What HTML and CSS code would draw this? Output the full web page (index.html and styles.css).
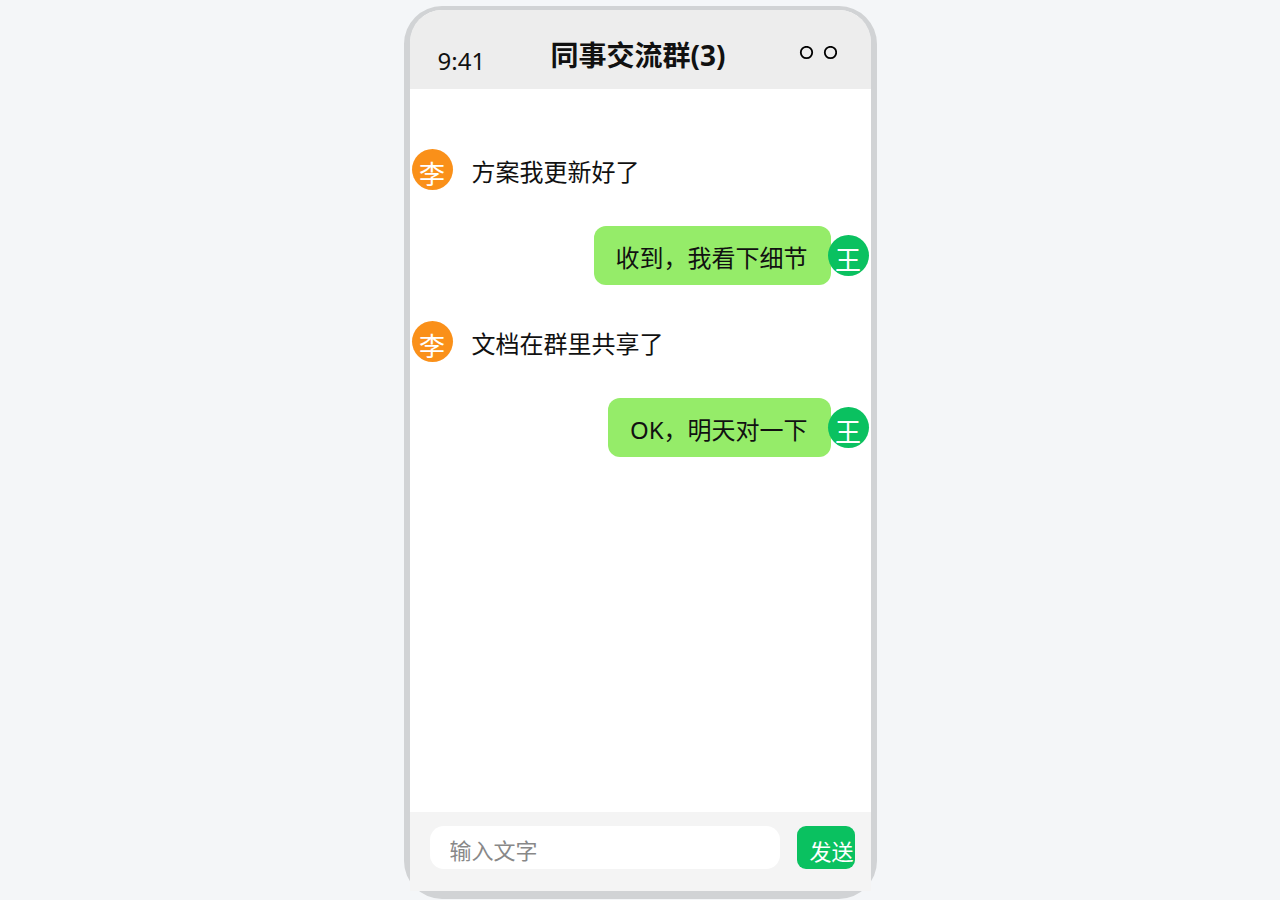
FILE: index.html
```html
<!DOCTYPE html>
<html lang="zh-CN">
<head>
    <meta charset="UTF-8">
    <meta name="viewport" content="width=device-width, initial-scale=1.0">
    <title>同事交流群</title>
    <link rel="stylesheet" href="styles.css">
</head>
<body>
    <div class="phone">
        <header class="chat-header">
            <span class="time">9:41</span>
            <h1 class="title">同事交流群(3)</h1>
            <svg class="dots" width="38" height="14" viewBox="0 0 38 14" fill="none" stroke="#000" stroke-width="1.8" aria-hidden="true">
                <circle cx="7.5" cy="6.5" r="5.7"/>
                <circle cx="31.5" cy="6.5" r="5.7"/>
            </svg>
        </header>

        <main class="messages">
            <div class="message other">
                <span class="avatar">李</span>
                <p class="bubble">方案我更新好了</p>
            </div>
            <div class="message user">
                <span class="avatar">王</span>
                <p class="bubble">收到，我看下细节</p>
            </div>
            <div class="message other">
                <span class="avatar">李</span>
                <p class="bubble">文档在群里共享了</p>
            </div>
            <div class="message user">
                <span class="avatar">王</span>
                <p class="bubble">OK，明天对一下</p>
            </div>
        </main>

        <form class="chat-input">
            <input type="text" class="text-input" placeholder="输入文字" aria-label="输入文字">
            <button type="button" class="send">发送</button>
        </form>
    </div>
</body>
</html>
```
FILE: styles.css
```css
* {
    box-sizing: border-box;
}

body {
    margin: 0;
    padding: 6px 16px 1px;
    min-height: 100vh;
    display: flex;
    justify-content: center;
    background-color: #f4f6f8;
    color: #111;
    font-family: "Noto Sans", "Noto Sans CJK SC", sans-serif;
    font-size: 24px;
}

.phone {
    width: 100%;
    max-width: 473px;
    display: flex;
    flex-direction: column;
    background-color: #fff;
    border: 6px solid #d1d3d5;
    border-top-width: 4px;
    border-bottom-width: 8px;
    border-radius: 38px;
}

.chat-header {
    display: grid;
    grid-template-columns: 1fr auto 1fr;
    align-items: center;
    padding: 10px 32px 0 28px;
    min-height: 79px;
    background-color: #ededed;
    border-radius: 32px 32px 0 0;
}

.time {
    padding-top: 12px;
    line-height: 32px;
}

.title {
    margin: 0;
    font-size: 28px;
    line-height: 40px;
}

.dots {
    justify-self: end;
    margin: 0 2px 4px 0;
}

.messages {
    flex: 1;
    display: flex;
    flex-direction: column;
    gap: 27px;
    padding: 51px 2px;
}

.message {
    display: flex;
    align-items: center;
}

.message.user {
    flex-direction: row-reverse;
}

.avatar {
    position: relative;
    flex: none;
    width: 41px;
    height: 41px;
    padding-top: 9px;
    border-radius: 50%;
    color: #fff;
    font-size: 26px;
    line-height: 32px;
    text-align: center;
}

.other .avatar {
    margin-right: -3px;
    background-color: #fa9019;
}

.user .avatar {
    margin-left: -3px;
    background-color: #0ac160;
}

.bubble {
    margin: 0;
    padding: 16px 23px 11px 22px;
    border-radius: 12px;
    background-color: #fff;
    line-height: 32px;
}

.user .bubble {
    background-color: #95ec69;
}

.chat-input {
    display: flex;
    gap: 17px;
    padding: 14px 16px 22px 20px;
    background-color: #f4f4f4;
}

.text-input {
    flex: 1;
    min-width: 0;
    height: 43px;
    padding: 4px 20px 0;
    border: none;
    border-radius: 14px;
    background-color: #fff;
    color: #111;
    font-family: inherit;
    font-size: 22px;
}

.text-input::placeholder {
    color: #888;
    opacity: 1;
}

.send {
    height: 43px;
    padding: 4px 1px 0 12px;
    border: none;
    border-radius: 9px;
    background-color: #0ac160;
    color: #fff;
    font-family: inherit;
    font-size: 22px;
    cursor: pointer;
}
```
